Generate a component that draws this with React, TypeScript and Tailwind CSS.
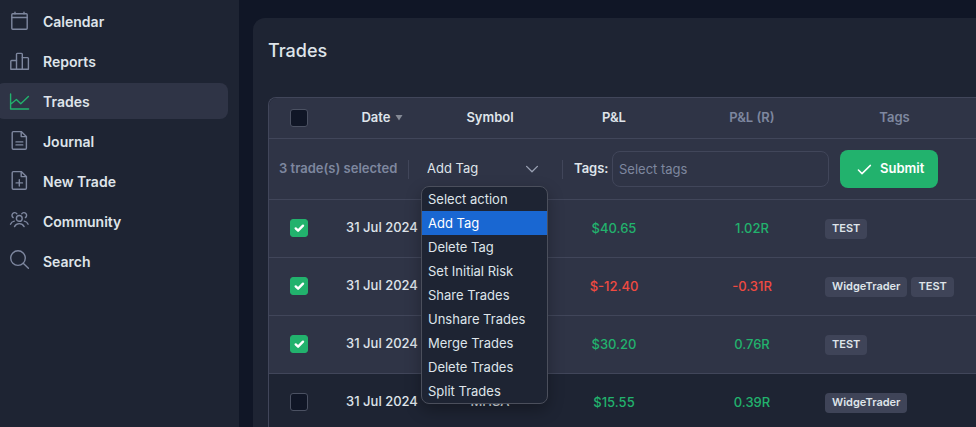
import { useState } from "react";
import type { ReactNode } from "react";
import clsx from "clsx";

type Trade = {
  id: number;
  date: string;
  symbol: string;
  pnl: string;
  pnlR: string;
  tags: string[];
  selected: boolean;
};

const TRADES: Trade[] = [
  { id: 1, date: "31 Jul 2024", symbol: "", pnl: "$40.65", pnlR: "1.02R", tags: ["TEST"], selected: true },
  { id: 2, date: "31 Jul 2024", symbol: "", pnl: "$-12.40", pnlR: "-0.31R", tags: ["WidgeTrader", "TEST"], selected: true },
  { id: 3, date: "31 Jul 2024", symbol: "", pnl: "$30.20", pnlR: "0.76R", tags: ["TEST"], selected: true },
  { id: 4, date: "31 Jul 2024", symbol: "MHSA", pnl: "$15.55", pnlR: "0.39R", tags: ["WidgeTrader"], selected: false },
];

const ACTIONS = [
  "Select action",
  "Add Tag",
  "Delete Tag",
  "Set Initial Risk",
  "Share Trades",
  "Unshare Trades",
  "Merge Trades",
  "Delete Trades",
  "Split Trades",
];

const FILE_OUTLINE = (
  <>
    <path d="M12.2 .6H4.4A1.2 1.2 0 0 0 3.2 1.8v15.2a1.2 1.2 0 0 0 1.2 1.2h11.8a1.2 1.2 0 0 0 1.2-1.2V5.6z" />
    <path d="M12.2 .6v5h5" />
  </>
);

const NAV: { label: string; icon: ReactNode }[] = [
  {
    label: "Calendar",
    icon: (
      <>
        <rect x="2.8" y="2.8" width="15.4" height="15.4" rx="1" />
        <path d="M2.8 6.5h15.4M6 1.2v1.6M15 1.2v1.6" />
      </>
    ),
  },
  {
    label: "Reports",
    icon: (
      <>
        <path d="M7.5 18.2V3.2a.8.8 0 0 1 .8-.8h4.2a.8.8 0 0 1 .8.8v15" />
        <path d="M7.5 9.5H2.6a.8.8 0 0 0-.8.8v7.9h17.6V7.4a.8.8 0 0 0-.8-.8h-5.3" />
      </>
    ),
  },
  {
    label: "Trades",
    icon: <path d="M1.6 3v15h18M1.6 13.2l5.8-4.7 4.4 4.2 7.6-7.2" />,
  },
  {
    label: "Journal",
    icon: (
      <>
        {FILE_OUTLINE}
        <path d="M7 10.9h6.8M7 13.9h6.8" />
      </>
    ),
  },
  {
    label: "New Trade",
    icon: (
      <>
        {FILE_OUTLINE}
        <path d="M10.3 8.7v6.4M7.1 11.9h6.4" />
      </>
    ),
  },
  {
    label: "Community",
    icon: (
      <>
        <circle cx="10.3" cy="7.4" r="2.9" />
        <path d="M5.5 15.6a5.4 5.4 0 0 1 9.6 0" />
        <path d="M4.2 6.6A2.7 2.7 0 1 1 7.9 2.8M16.4 6.6a2.7 2.7 0 1 0-3.7-3.8" />
        <path d="M1.5 13.2a5 5 0 0 1 3.8-3.1M19.1 13.2a5 5 0 0 0-3.8-3.1" />
      </>
    ),
  },
  {
    label: "Search",
    icon: (
      <>
        <circle cx="9" cy="7.1" r="7.3" />
        <path d="M14.2 12.3l5.2 5" />
      </>
    ),
  },
];

function Sidebar() {
  return (
    <aside className="w-[239px] shrink-0 bg-[#1e2433] pt-[3px] pr-[11px]">
      <nav className="-ml-1 flex flex-col gap-1">
        {NAV.map((item) => {
          const active = item.label === "Trades";
          return (
            <a
              key={item.label}
              href="#"
              className={clsx(
                "flex h-9 items-center gap-3.5 rounded-lg pl-[13px] text-sm font-semibold text-[#dfe4ea]",
                active && "bg-[#2f3446]",
              )}
            >
              <svg
                viewBox="0 0 20 20"
                className={clsx("h-5 w-5 overflow-visible", active ? "text-[#22b26d]" : "text-[#7e879f]")}
                fill="none"
                stroke="currentColor"
                strokeWidth="1.4"
                strokeLinecap="round"
                strokeLinejoin="round"
                aria-hidden="true"
              >
                {item.icon}
              </svg>
              <span className="pt-px">{item.label}</span>
            </a>
          );
        })}
      </nav>
    </aside>
  );
}

function Checkbox({ label, checked, onChange }: { label: string; checked: boolean; onChange: () => void }) {
  return (
    <label className="relative mx-auto block h-[18px] w-[18px]">
      <input
        type="checkbox"
        aria-label={label}
        checked={checked}
        onChange={onChange}
        className="block h-[18px] w-[18px] appearance-none rounded-[3px] border border-[#4b5162] bg-[#101626] checked:border-[#22b26d] checked:bg-[#22b26d]"
      />
      {checked && (
        <svg
          viewBox="0 0 18 18"
          className="pointer-events-none absolute inset-0"
          fill="none"
          stroke="#fff"
          strokeWidth="2.4"
          strokeLinecap="round"
          strokeLinejoin="round"
        >
          <path d="M5.7 9.4l2.4 2.3 4.9-5" />
        </svg>
      )}
    </label>
  );
}

function ActionSelect() {
  const [action, setAction] = useState("Add Tag");
  const [open, setOpen] = useState(true);

  return (
    <div className="relative ml-3 w-[127px]">
      <select
        aria-label="Action"
        value={action}
        onChange={(e) => setAction(e.target.value)}
        className="block h-[34px] w-full appearance-none bg-transparent pl-1.5 text-[13px] text-[#dfe4ea] outline-none"
      >
        {ACTIONS.map((a) => (
          <option key={a}>{a}</option>
        ))}
      </select>
      <svg
        viewBox="0 0 12 12"
        className="pointer-events-none absolute top-[11px] right-[10px] h-3 w-3"
        fill="none"
        stroke="#9aa1b3"
        strokeWidth="1.3"
        strokeLinecap="round"
        strokeLinejoin="round"
      >
        <path d="M.6 3.4L6 8.8l5.4-5.4" />
      </svg>
      {open && (
        <ul className="absolute top-full left-0 z-10 w-full overflow-hidden rounded-lg border border-[#4b4f5c] bg-[#1e2433] shadow-[0_6px_16px_rgba(0,0,0,0.3)]">
          {ACTIONS.map((a) => (
            <li key={a}>
              <button
                type="button"
                onClick={() => {
                  setAction(a);
                  setOpen(false);
                }}
                className={clsx(
                  "block h-6 w-full pt-0.5 pl-1.5 text-left text-[13px] whitespace-nowrap text-[#dfe4ea]",
                  a === action && "bg-[#1967d2] text-white",
                )}
              >
                {a}
              </button>
            </li>
          ))}
        </ul>
      )}
    </div>
  );
}

function BulkActions({ count }: { count: number }) {
  return (
    <div className="flex h-[60px] items-center pl-[10px]">
      <span className="w-[129px] font-semibold text-[#7e879f]">{count} trade(s) selected</span>
      <span className="h-[19px] w-px bg-[#41465a]" />
      <ActionSelect />
      <span className="ml-[14px] h-[19px] w-px bg-[#41465a]" />
      <label htmlFor="tags" className="ml-[11px] w-[38px] font-semibold text-[#dfe4ea]">
        Tags:
      </label>
      <input
        id="tags"
        placeholder="Select tags"
        className="h-9 w-[217px] rounded-lg border border-[#41465a] bg-transparent px-1.5 text-[13px] text-[#dfe4ea] outline-none placeholder:text-[#7e879f]"
      />
      <button
        type="button"
        className="ml-[11px] flex h-[38px] w-[98px] shrink-0 items-center gap-2 rounded-lg bg-[#22b26d] pl-4 font-semibold text-white"
      >
        <svg
          viewBox="0 0 16 16"
          className="h-4 w-4"
          fill="none"
          stroke="currentColor"
          strokeWidth="1.5"
          strokeLinecap="round"
          strokeLinejoin="round"
          aria-hidden="true"
        >
          <path d="M2.4 9l3.6 3.6 8.4-8.2" />
        </svg>
        Submit
      </button>
    </div>
  );
}

export default function App() {
  const [trades, setTrades] = useState(TRADES);
  const count = trades.filter((t) => t.selected).length;
  const allSelected = count === trades.length;

  const toggle = (id: number) =>
    setTrades(trades.map((t) => (t.id === id ? { ...t, selected: !t.selected } : t)));
  const toggleAll = () => setTrades(trades.map((t) => ({ ...t, selected: !allSelected })));

  return (
    <div className="flex h-screen overflow-hidden bg-[#101626] font-[Inter,sans-serif] text-[#dfe4ea]">
      <Sidebar />
      <main className="min-w-0 flex-1 pt-[18px] pl-3.5">
        <div className="min-h-full rounded-tl-xl bg-[#1e2433] pl-[15px]">
          <h1 className="pt-[19px] pb-[32px] text-lg leading-7 font-medium">Trades</h1>
          <div className="rounded-tl-lg border-t border-l border-[#41465a]">
            <table className="w-full table-fixed border-separate border-spacing-0 text-[13px]">
              <colgroup>
                <col className="w-[60px]" />
                <col className="w-[106px]" />
                <col className="w-[110px]" />
                <col className="w-[138px]" />
                <col className="w-[138px]" />
                <col />
              </colgroup>
              <thead>
                <tr className="h-[41px] *:border-b *:border-[#41465a] *:bg-[#2f3446] *:p-0 *:font-semibold">
                  <th className="rounded-tl-lg">
                    <Checkbox label="Select all trades" checked={allSelected} onChange={toggleAll} />
                  </th>
                  <th>
                    <button type="button" className="inline-flex items-center gap-1 font-semibold">
                      Date
                      <svg viewBox="0 0 8 6" className="h-1.5 w-2" fill="#858a96" aria-hidden="true">
                        <path d="M.5 0h7L4 5.5z" />
                      </svg>
                    </button>
                  </th>
                  <th>Symbol</th>
                  <th>P&amp;L</th>
                  <th className="text-[#7e879f]">P&amp;L (R)</th>
                  <th className="text-[#7e879f]">
                    <span className="pr-2">Tags</span>
                  </th>
                </tr>
              </thead>
              <tbody>
                <tr className="bg-[#2f3446]">
                  <td colSpan={6} className="border-b border-[#41465a] p-0">
                    <BulkActions count={count} />
                  </td>
                </tr>
                {trades.map((trade) => {
                  const pnlColor = trade.pnl.includes("-") ? "text-[#f04a41]" : "text-[#22b26d]";
                  return (
                    <tr
                      key={trade.id}
                      className={clsx(
                        "h-[58px] text-center font-medium *:border-b *:border-[#41465a] *:px-0 *:pt-0",
                        trade.selected && "bg-[#2f3446]",
                      )}
                    >
                      <td className="pb-0.5">
                        <Checkbox
                          label={`Select trade ${trade.id}`}
                          checked={trade.selected}
                          onChange={() => toggle(trade.id)}
                        />
                      </td>
                      <td className="pb-0.5">{trade.date}</td>
                      <td className="pb-0.5">{trade.symbol}</td>
                      <td className={clsx("pb-0", pnlColor)}>{trade.pnl}</td>
                      <td className={clsx("pb-0", pnlColor)}>{trade.pnlR}</td>
                      <td className="pb-0">
                        <div className="flex gap-1 pl-1">
                          {trade.tags.map((tag) => (
                            <span
                              key={tag}
                              className="h-5 rounded bg-[#3f4458] px-[7px] text-[11px] leading-[18px] font-semibold"
                            >
                              {tag}
                            </span>
                          ))}
                        </div>
                      </td>
                    </tr>
                  );
                })}
              </tbody>
            </table>
          </div>
        </div>
      </main>
    </div>
  );
}
